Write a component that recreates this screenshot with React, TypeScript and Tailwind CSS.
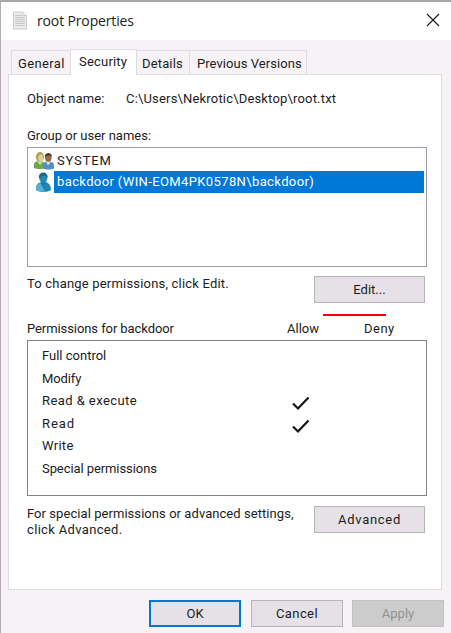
import type { ReactNode } from "react";

function Button({ className, children }: { className: string; children: ReactNode }) {
  return (
    <button className={`flex shrink-0 items-center justify-center whitespace-nowrap ${className}`}>
      {children}
    </button>
  );
}

function DocIcon() {
  return (
    <svg width="16" height="19" viewBox="0 0 16 19">
      <path d="M1.500 1h9.500l3.500 3v14H1.500z" fill="#ececec" stroke="#cccccc" />
      <path d="M11 1v3.500h3.500" fill="#fff" stroke="#c8c8c8" />
      <path d="M3 4.500h7M3 6.500h10M3 8.500h10M3 10.500h10M3 12.500h10M3 14.500h10" stroke="#c2c2c2" strokeWidth=".9" />
    </svg>
  );
}

function GroupIcon() {
  return (
    <svg width="20" height="18" viewBox="0 0 20 18">
      <path d="M0 16v-3c0-3 2-4 5-4s6 1 6 4v3c-3 1.300-8 1.300-11 0z" fill="#70a64d" />
      <path d="M3 9l3 4 3-4z" fill="#d8e6c0" />
      <ellipse cx="6" cy="5" rx="4" ry="5" fill="#b0a04f" />
      <ellipse cx="6.800" cy="6" rx="2.500" ry="3.500" fill="#e6cf98" />
      <path d="M9 16.500v-3c0-3 2-4 5.500-4s5.500 1.500 5.500 4v3c-3 1.300-8 1.300-11 0z" fill="#568fc5" />
      <path d="M12 9.500l2 4 3-4z" fill="#d6e7f3" />
      <ellipse cx="14.300" cy="5.500" rx="3.300" ry="4.200" fill="#9b6845" />
      <path d="M10.800 5c0-5 7.200-5 7.200 0l-1.500-1.700-3.500.2z" fill="#3c302b" />
    </svg>
  );
}

function UserIcon() {
  return (
    <svg width="17" height="21" viewBox="0 0 17 21">
      <path d="M0 18c0-5 1-7 5.500-8h4c4 1 5.500 4 5.500 8-3 2.500-12 2.500-15 0z" fill="#1e88b8" />
      <path d="M0 18c0-4 1-6 4-7l5 8.500C5.500 20 2 19.500 0 18z" fill="#54b4cf" />
      <path d="M5 10l2.500 4 3-4z" fill="#1776b1" />
      <ellipse cx="7.300" cy="6" rx="4" ry="5" fill="#2387b7" />
      <path d="M2.800 6C2-1.500 12.500-1.500 11.700 6l-2-2.500-4 .5-1 2z" fill="#1b668f" />
    </svg>
  );
}

const permissions = [
  { name: "Full control", allow: false, fit: "tracking-[0px]" },
  { name: "Modify", allow: false, fit: "tracking-[-0.1px]" },
  { name: "Read & execute", allow: true, fit: "tracking-[0.43px]" },
  { name: "Read", allow: true, fit: "tracking-[0.9px]" },
  { name: "Write", allow: false, fit: "tracking-[0.3px]" },
  { name: "Special permissions", allow: false, fit: "tracking-[-0.08px]" },
];

export default function App() {
  return (
    <div className="flex h-[633px] w-[451px] flex-col overflow-hidden border-l border-[#b3abb1] bg-[#f7f2f6] font-[Roboto,sans-serif] text-[13px] leading-4 whitespace-nowrap text-[#1c1c1c]">
      <header className="flex h-10 shrink-0 items-start border-t-2 border-[#a6a6a6] bg-white pl-[11px]">
        <div className="mt-[9px]"><DocIcon /></div>
        <h1 className="mt-[9px] ml-[9px] font-['Open_Sans',sans-serif] text-[14px] leading-5 tracking-[-0.14px]">root Properties</h1>
        <svg className="mt-[11px] mr-[11px] ml-auto" width="14" height="14" viewBox="0 0 14 14">
          <path d="M1 1l12 12M13 1L1 13" stroke="#222" strokeWidth="1.300" />
        </svg>
      </header>

      <nav className="mt-[9px] ml-[10px] flex h-[26px] shrink-0 items-end">
        <div className="mb-px h-6 w-[59px] border-t border-l border-[#dfdbe0] pt-[5px] pl-[6px] tracking-[0.35px]">General</div>
        <div className="z-10 h-[26px] w-[67px] border-x border-t border-[#dfdbe0] bg-white pt-[4px] pl-[8px] tracking-[0.2px]">Security</div>
        <div className="mb-px h-6 w-[53px] border-t border-r border-[#dfdbe0] pt-[5px] pl-[5px] tracking-[0.15px]">Details</div>
        <div className="mb-px h-6 w-[117px] border-t border-r border-[#dfdbe0] pt-[5px] pl-[7px] tracking-[0.06px]">Previous Versions</div>
      </nav>

      <main className="-mt-px ml-[7px] flex h-[516px] w-[434px] shrink-0 flex-col border border-[#dfdbe0] bg-white pl-[18px]">
        <div className="mt-[16px] flex h-4">
          <span className="w-[99px] tracking-[0.1px]">Object name:</span>
          <span className="tracking-[0.18px]">C:\Users\Nekrotic\Desktop\root.txt</span>
        </div>
        <div className="mt-[21px] h-4">Group or user names:</div>
        <div className="mt-[3px] flex h-[120px] w-[400px] shrink-0 flex-col border border-[#9e9ba9] pt-[3px] pl-[6px]">
          <div className="flex h-5 items-center">
            <GroupIcon />
            <span className="ml-[3px] tracking-[0.85px]">SYSTEM</span>
          </div>
          <div className="flex h-[22px] items-center">
            <div className="ml-[2px] w-[18px]"><UserIcon /></div>
            <div className="mr-[2px] flex h-[22px] flex-1 items-center bg-[#0078d7] pl-[3px] text-white">
              <span className="tracking-[0.38px]">backdoor (WIN-EOM4PK0578N\backdoor)</span>
            </div>
          </div>
        </div>

        <div className="mt-[9px] flex h-[27px]">
          <span className="w-[287px] tracking-[0.19px]">To change permissions, click Edit.</span>
          <Button className="h-[27px] w-[111px] border border-[#b7b4b8] bg-[#e6e1e6]">Edit...</Button>
        </div>
        <div className="mt-[11px] ml-[296px] h-[2px] w-[63px] bg-[#fa0000]" />
        <div className="mt-[5px] flex h-4">
          <span className="w-[260px] tracking-[-0.08px]">Permissions for backdoor</span>
          <span className="w-[77px]">Allow</span>
          <span className="tracking-[0.5px]">Deny</span>
        </div>
        <div className="mt-[3px] flex h-[156px] w-[400px] shrink-0 flex-col border border-[#828282] pt-[4px] pl-[14px]">
          {permissions.map((p) => (
            <div key={p.name} className="flex h-[22.5px] items-center">
              <span className={`w-[250px] ${p.fit}`}>{p.name}</span>
              {p.allow && (
                <svg className="mt-[5px]" width="18" height="15" viewBox="0 0 18 15">
                  <path d="M1 7.500L6 12.500 16.500 1.500" fill="none" stroke="#151515" strokeWidth="2.200" />
                </svg>
              )}
            </div>
          ))}
        </div>
        <div className="mt-[10px] flex h-[40px]">
          <p className="w-[287px] tracking-[0.06px]">
            For special permissions or advanced settings,<br />
            <span className="tracking-[0.33px]">click Advanced.</span>
          </p>
          <Button className="h-[27px] w-[111px] border border-[#b7b4b8] bg-[#e6e1e6] tracking-[0.7px]">Advanced</Button>
        </div>
      </main>

      <footer className="mt-[10px] flex shrink-0 pl-[148px]">
        <Button className="h-[27px] w-[92px] border-2 border-[#0078d7] bg-[#e6e1e6]">OK</Button>
        <Button className="ml-[10px] h-[27px] w-[92px] border border-[#b7b4b8] bg-[#e6e1e6] tracking-[0.4px]">Cancel</Button>
        <Button className="ml-[9px] h-[27px] w-[92px] border border-[#c2c0c2] bg-[#cdcccd] text-[#929092]">Apply</Button>
      </footer>
    </div>
  );
}
